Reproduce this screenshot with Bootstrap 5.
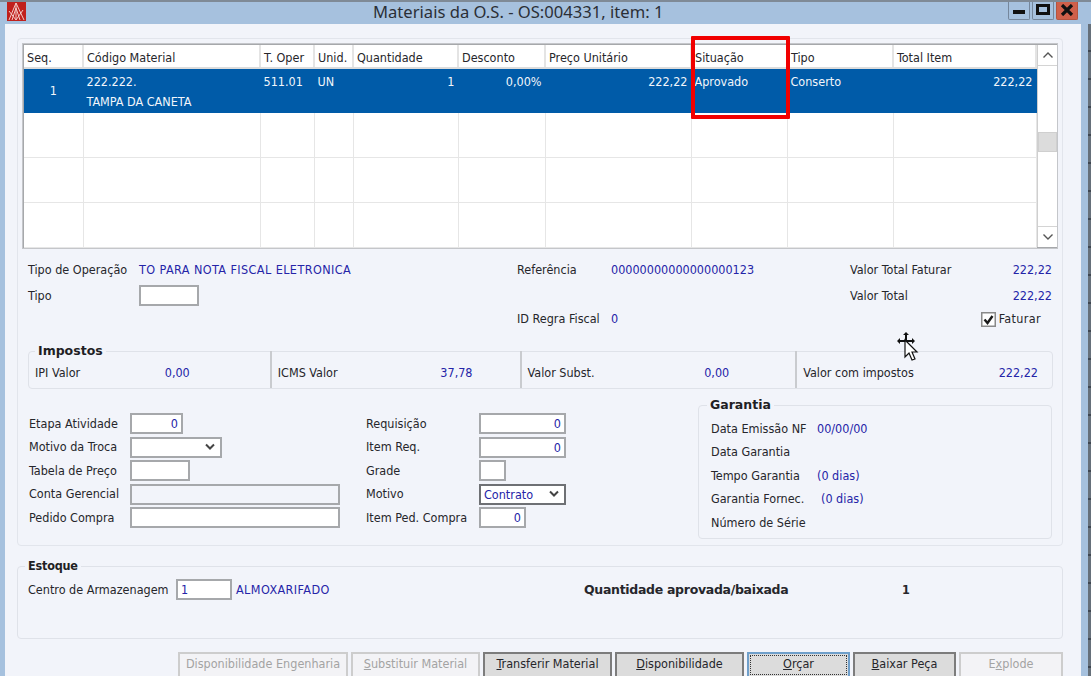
<!DOCTYPE html>
<html lang="pt">
<head>
<meta charset="utf-8">
<title>Materiais da O.S.</title>
<link href="https://cdn.jsdelivr.net/npm/bootstrap@5.3.0/dist/css/bootstrap.min.css" rel="stylesheet">
<style>
html,body{margin:0;padding:0;background:#a6c0dc;overflow:hidden}
.janela{width:1091px;height:676px;overflow:hidden;position:relative;background:#a6c1de;border-top:2px solid #7f8a96;
 font-family:"DejaVu Sans","Noto Sans",sans-serif;font-stretch:condensed;font-size:12.5px;line-height:16px;color:#26262b}
.barra{height:22px;flex:none}
.icone-app{margin-left:7px;width:19px;height:19px;flex:none}
.titulo{margin-left:347px;font-family:"Noto Sans",sans-serif;font-stretch:normal;font-size:16.6px;line-height:20px;color:#2b2f36;white-space:nowrap}
.ctrl{margin-left:auto;margin-right:13px;margin-top:-2px}
.ctrl span{display:flex;align-items:center;justify-content:center;height:20px;border:1px solid #75879c;border-top:0;border-radius:0 0 2px 2px}
.c-min,.c-max{width:22px;margin-right:2px}
.c-fechar{width:22px;background:#d0604a;border-color:#b5543f!important}
.corpo{flex:1 1 auto;min-height:0}
.cliente{margin-left:5px;width:1076px;background:#f2f4fa;padding:14px 18px 0 12px}
.faixa{width:10px;flex:none}
.faixa i{display:block;width:7px;background:#a6c1de}
.faixa b{display:block;width:3px;background:repeating-linear-gradient(#66707a 0 26px,#3f4650 26px 28px)}
.quadro{height:508px;border:1px solid #e2e5ec;border-radius:4px;position:relative}
.gradewrap{margin:4px 0 0 4px;width:1036px;height:206px;border:2px solid #a6a8ab;background:#fff;outline:1px solid #c4c6ca;outline-offset:-1px}
.grade{table-layout:fixed;width:1012px;--bs-table-bg:transparent;font-size:12.5px;line-height:16px}
.grade th,.grade td{padding:0 3px;font-weight:400;border:0;border-right:1px solid #e6e6e6;border-bottom:1px solid #e6e6e6;color:#26262b;white-space:nowrap;overflow:hidden}
.grade thead th{height:23px;vertical-align:middle;background:#fff;border-bottom:2px solid #dcdcdc;border-right:2px solid #e4e4e4;padding-top:3px}
.grade tbody tr{height:45px}
.grade tbody tr.sel{height:44px}
.grade .sel td{background:#005ba8;color:#f2f6fb;border-color:#005ba8;height:44px;vertical-align:top;padding-top:3px;line-height:20px;box-shadow:none}
.grade .sel td.mid{vertical-align:middle;padding-top:0;text-align:center}
.rolagem{width:20px;flex:none;border-left:1px solid #cfcfcf;height:202px;background:#fff}
.rolagem div{display:flex;align-items:center;justify-content:center;height:21px;border-bottom:1px solid #d4d4d4}
.rolagem .seta-b{margin-top:auto;border-bottom:0;border-top:1px solid #d4d4d4}
.rolagem .polegar{height:20px;margin-top:66px;background:#dcdcdc;border:1px solid #cfcfcf}
.topo{display:grid;grid-template-columns:111px 378px 94px 239px 202px;grid-template-rows:26px 25px 22px;margin:8px 0 0 10px;align-items:center}
.azul{color:#2524a8}
.maiusc{letter-spacing:.42px}
.campo{display:block;height:21px;padding:0 3px;border:2px solid #a6a8ab;border-radius:0;background-color:#fff;font:inherit;line-height:15px;color:#2524a8;box-shadow:none;min-height:0}
.campo.dir{text-align:right}
.campo:disabled{background:#f2f4fa}
.selecao{padding:0 20px 0 3px;border:2px solid #a6a8ab;background-position:right 4px center;background-size:12px 8px;
 background-image:url("data:image/svg+xml,%3Csvg xmlns='http://www.w3.org/2000/svg' viewBox='0 0 12 8'%3E%3Cpath d='M2 1.5l4 4 4-4' fill='none' stroke='%23444' stroke-width='2'/%3E%3C/svg%3E")}
.selecao.forte{border-color:#6e7074}
fieldset.grupo{border:1px solid #dfe2e9;border-radius:4px;padding:0;margin:0;min-width:0}
fieldset.grupo legend{float:none;width:auto;font-size:12.5px;line-height:16px;font-weight:700;font-stretch:normal;margin:0 0 0 6px;padding:0 3px;color:#1f1f24}
fieldset.grupo.imp{margin:13px 0 0 10px;width:1025px;height:46px}
.imp-linhas{margin-top:-8px;height:37px}
.imp-cel{border-right:2px solid #c9cbcf;padding:7px 14px 0 6px;height:37px;align-items:center}
.imp-cel:last-child{border-right:0}
.imp-a{width:243px}.imp-b{width:250px}.imp-c{width:276px}.imp-d{width:255px}
.imp-a .azul{margin-right:66px}.imp-b .azul{margin-right:33px}.imp-c .azul{margin-right:52px}
.medio{margin:8px 0 0 0;height:142px}
.form-esq{width:337px;margin:15px 0 0 11px;display:grid;grid-template-columns:101px 1fr;grid-auto-rows:23.5px;align-items:center;justify-items:start}
.form-mei{width:332px;margin-top:15px;display:grid;grid-template-columns:113px 1fr;grid-auto-rows:23.5px;align-items:center;justify-items:start}
fieldset.grupo.garantia{width:354px;height:142px}
.gar-linhas{margin-top:4px;display:grid;grid-template-columns:106px 1fr;grid-auto-rows:23.5px;align-items:center;padding-left:12px}
fieldset.grupo.est{width:1046px;height:81px;margin-top:12px}
fieldset.grupo.est legend{margin-left:7px;font-stretch:condensed;letter-spacing:-.2px}
.est-linha{margin:5px 0 0 10px}
.qtd{font-weight:700;font-stretch:normal;letter-spacing:-.3px;margin-left:254px;width:318px}
.forte-txt{font-weight:700}
.fat{padding-right:11px;gap:3px}
.fat span{letter-spacing:.35px}
.botoes{margin-top:13px;gap:3px;justify-content:flex-end}
.botao{height:26px;padding:0 0 3px;font:inherit;border-radius:0;background:#dcdcdc;border:2px solid #7c7c7c;border-bottom-color:#9a9a9a;color:#26262b;--bs-btn-padding-y:0}
.botao:disabled{opacity:1;background:#f3f3f6;border-color:#cdcdcd;color:#a3a3a3}
.botao.foco{border-color:#6f9fca;position:relative;outline:1px dotted #333;outline-offset:-4px}
.m-red{position:absolute;left:673px;top:-3px;width:99px;height:83px;border:4px solid #f10000;border-radius:1px;pointer-events:none}
.cursor{position:absolute;left:897px;top:330px;pointer-events:none}
.ck{width:15px;height:15px;flex:none}
</style>
</head>
<body>
<div class="janela d-flex flex-column">
  <div class="barra d-flex align-items-start">
    <svg class="icone-app" viewBox="0 0 19 19"><rect width="19" height="19" fill="#c0201c"/><path d="M2 18L9 1l8 17M5 18L9 6l4 12M2 9l7 9 7-10M9 1v17" fill="none" stroke="#f3c9c4" stroke-width="1"/></svg>
    <div class="titulo">Materiais da O.S. - OS:004331, item: 1</div>
    <div class="ctrl d-flex">
      <span class="c-min"><svg width="14" height="10" viewBox="0 0 14 10"><rect x="1" y="5" width="12" height="4" fill="#111"/></svg></span>
      <span class="c-max"><svg width="14" height="11" viewBox="0 0 14 11"><rect x="1.5" y="1.5" width="11" height="8" fill="none" stroke="#111" stroke-width="3"/></svg></span>
      <span class="c-fechar"><svg width="14" height="12" viewBox="0 0 14 12"><path d="M2 1l10 10M12 1L2 11" stroke="#111" stroke-width="3.2" fill="none"/></svg></span>
    </div>
  </div>
  <div class="corpo d-flex">
    <div class="cliente">
      <div class="quadro">
        <div class="gradewrap d-flex">
          <table class="table grade mb-0">
            <colgroup><col style="width:59px"><col style="width:177px"><col style="width:54px"><col style="width:39px"><col style="width:105px"><col style="width:87px"><col style="width:146px"><col style="width:96px"><col style="width:106px"><col style="width:143px"></colgroup>
            <thead><tr><th>Seq.</th><th>Código Material</th><th>T. Oper</th><th>Unid.</th><th>Quantidade</th><th>Desconto</th><th>Preço Unitário</th><th>Situação</th><th>Tipo</th><th>Total Item</th></tr></thead>
            <tbody>
              <tr class="sel"><td class="mid">1</td><td>222.222.<br>TAMPA DA CANETA</td><td>511.01</td><td>UN</td><td class="text-end">1</td><td class="text-end">0,00%</td><td class="text-end">222,22</td><td>Aprovado</td><td>Conserto</td><td class="text-end">222,22</td></tr>
              <tr><td></td><td></td><td></td><td></td><td></td><td></td><td></td><td></td><td></td><td></td></tr>
              <tr><td></td><td></td><td></td><td></td><td></td><td></td><td></td><td></td><td></td><td></td></tr>
              <tr><td></td><td></td><td></td><td></td><td></td><td></td><td></td><td></td><td></td><td></td></tr>
            </tbody>
          </table>
          <div class="rolagem d-flex flex-column">
            <div><svg width="12" height="8" viewBox="0 0 12 8"><path d="M1.5 6.5L6 2l4.500 4.500" fill="none" stroke="#555" stroke-width="1.4"/></svg></div>
            <div class="polegar"></div>
            <div class="seta-b"><svg width="12" height="8" viewBox="0 0 12 8"><path d="M1.500 1.500L6 6l4.500-4.500" fill="none" stroke="#555" stroke-width="1.4"/></svg></div>
          </div>
        </div>
        <div class="m-red"></div>

        <div class="topo">
          <div>Tipo de Operação</div><div class="azul maiusc">TO PARA NOTA FISCAL ELETRONICA</div><div>Referência</div><div class="azul">00000000000000000123</div>
          <div class="d-flex justify-content-between"><span>Valor Total Faturar</span><span class="azul">222,22</span></div>
          <div>Tipo</div><div><input class="form-control campo" style="width:60px" aria-label="Tipo"></div><div></div><div></div>
          <div class="d-flex justify-content-between"><span>Valor Total</span><span class="azul">222,22</span></div>
          <div></div><div></div><div>ID Regra Fiscal</div><div class="azul">0</div>
          <div class="d-flex align-items-center justify-content-end fat">
            <svg class="ck" viewBox="0 0 15 15"><rect x=".75" y=".75" width="13.500" height="13.500" fill="#fff" stroke="#8a8a8a" stroke-width="1.500"/><path d="M3.500 7.500l3 3.500 5-7" fill="none" stroke="#1a1a1a" stroke-width="2.400"/></svg>
            <span>Faturar</span>
          </div>
        </div>

        <fieldset class="grupo imp">
          <legend>Impostos</legend>
          <div class="imp-linhas d-flex">
            <div class="imp-cel imp-a d-flex justify-content-between"><span>IPI Valor</span><span class="azul">0,00</span></div>
            <div class="imp-cel imp-b d-flex justify-content-between"><span>ICMS Valor</span><span class="azul">37,78</span></div>
            <div class="imp-cel imp-c d-flex justify-content-between"><span>Valor Subst.</span><span class="azul">0,00</span></div>
            <div class="imp-cel imp-d d-flex justify-content-between"><span>Valor com impostos</span><span class="azul">222,22</span></div>
          </div>
        </fieldset>

        <div class="medio d-flex">
          <div class="form-esq">
            <div>Etapa Atividade</div><input class="form-control campo dir" style="width:53px" value="0" aria-label="Etapa Atividade">
            <div>Motivo da Troca</div><select class="form-select campo selecao" style="width:92px" aria-label="Motivo da Troca"><option></option></select>
            <div>Tabela de Preço</div><input class="form-control campo" style="width:60px" aria-label="Tabela de Preço">
            <div>Conta Gerencial</div><input class="form-control campo" style="width:210px" disabled aria-label="Conta Gerencial">
            <div>Pedido Compra</div><input class="form-control campo" style="width:210px" aria-label="Pedido Compra">
          </div>
          <div class="form-mei">
            <div>Requisição</div><input class="form-control campo dir" style="width:87px" value="0" aria-label="Requisição">
            <div>Item Req.</div><input class="form-control campo dir" style="width:87px" value="0" aria-label="Item Req.">
            <div>Grade</div><input class="form-control campo" style="width:27px" aria-label="Grade">
            <div>Motivo</div><select class="form-select campo selecao forte" style="width:87px" aria-label="Motivo"><option>Contrato</option></select>
            <div>Item Ped. Compra</div><input class="form-control campo dir" style="width:47px" value="0" aria-label="Item Ped. Compra">
          </div>
          <fieldset class="grupo garantia">
            <legend class="ms-2">Garantia</legend>
            <div class="gar-linhas">
              <div>Data Emissão NF</div><div class="azul">00/00/00</div>
              <div>Data Garantia</div><div></div>
              <div>Tempo Garantia</div><div class="azul">(0 dias)</div>
              <div>Garantia Fornec.</div><div class="azul ps-1">(0 dias)</div>
              <div>Número de Série</div><div></div>
            </div>
          </fieldset>
        </div>
      </div>

      <fieldset class="grupo est">
        <legend>Estoque</legend>
        <div class="est-linha d-flex align-items-center">
          <div style="width:148px">Centro de Armazenagem</div>
          <input class="form-control campo" style="width:56px" value="1" aria-label="Centro de Armazenagem">
          <div class="azul ms-1 maiusc" style="width:94px">ALMOXARIFADO</div>
          <div class="qtd">Quantidade aprovada/baixada</div>
          <div class="forte-txt">1</div>
        </div>
      </fieldset>

      <div class="botoes d-flex">
        <button class="btn botao" disabled style="width:170px">Disponibilidade Engenharia</button>
        <button class="btn botao" disabled style="width:129px"><u>S</u>ubstituir Material</button>
        <button class="btn botao" style="width:129px"><u>T</u>ransferir Material</button>
        <button class="btn botao" style="width:129px"><u>D</u>isponibilidade</button>
        <button class="btn botao foco" style="width:103px"><u>O</u>rçar</button>
        <button class="btn botao" style="width:103px"><u>B</u>aixar Peça</button>
        <button class="btn botao" disabled style="width:104px">E<u>x</u>plode</button>
      </div>
    </div>
    <div class="faixa d-flex"><i></i><b></b></div>
  </div>
  <svg class="cursor" width="22" height="30" viewBox="0 0 22 30">
    <path d="M9 0l3 3h-2v5h5V6l3 3-3 3v-2h-5v3H8v-3H3v2L0 9l3-3v2h5V3H6z" fill="#111"/>
    <path d="M8 8v17l4-4 3 7 3-1-3-7h5z" fill="#fff" stroke="#111" stroke-width="1.200"/>
  </svg>
</div>
<script src="https://cdn.jsdelivr.net/npm/bootstrap@5.3.0/dist/js/bootstrap.bundle.min.js"></script>
</body>
</html>
